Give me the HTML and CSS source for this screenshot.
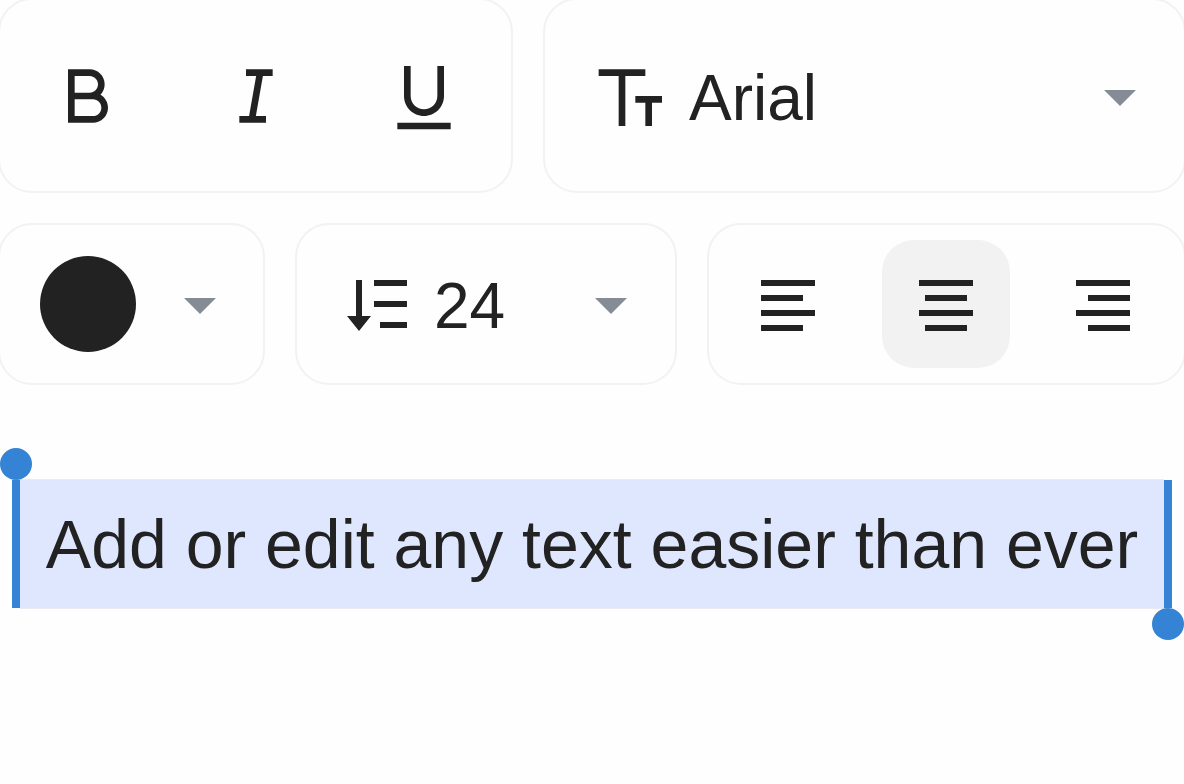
FILE: index.html
```html
<!DOCTYPE html>
<html lang="en">
<head>
<meta charset="utf-8">
<meta name="viewport" content="width=device-width, initial-scale=1">
<title>Text editor</title>
<link rel="stylesheet" href="styles.css">
</head>
<body>
<main class="app">
  <div class="toolbar" role="toolbar" aria-label="Text formatting">
    <div class="row row-style">
      <div class="panel buttons" role="group" aria-label="Style">
        <button class="tool" type="button" aria-label="Bold">
          <svg class="icon icon-large" viewBox="0 0 24 24" aria-hidden="true"><path d="M8 11H12.5C13.88 11 15 9.88 15 8.5C15 7.12 13.88 6 12.5 6H8V11ZM18 15.5C18 17.985 15.985 20 13.5 20H6V4H12.5C14.985 4 17 6.015 17 8.5C17 9.704 16.527 10.798 15.756 11.606C17.098 12.385 18 13.837 18 15.5ZM8 13V18H13.5C14.88 18 16 16.88 16 15.5C16 14.12 14.88 13 13.5 13H8Z"/></svg>
        </button>
        <button class="tool" type="button" aria-label="Italic">
          <svg class="icon icon-large" viewBox="0 0 24 24" aria-hidden="true"><path d="M15 20H7V18H9.927L12.043 6H9V4H17V6H14.073L11.957 18H15V20Z"/></svg>
        </button>
        <button class="tool" type="button" aria-label="Underline">
          <svg class="icon icon-large" viewBox="0 0 24 24" aria-hidden="true"><path d="M8 3V12C8 14.209 9.791 16 12 16C14.209 16 16 14.209 16 12V3H18V12C18 15.314 15.314 18 12 18C8.686 18 6 15.314 6 12V3H8ZM4 20H20V22H4V20Z"/></svg>
        </button>
      </div>
      <div class="panel picker">
        <select class="field field-font" aria-label="Font">
          <option>Arial</option>
          <option>Georgia</option>
          <option>Verdana</option>
        </select>
        <svg class="icon icon-large lead" viewBox="0 0 24 24" aria-hidden="true"><path d="M10 6V21H8V6H2V4H16V6H10ZM18 14V21H16V14H13V12H21V14H18Z"/></svg>
        <svg class="arrow" viewBox="0 0 32 20" aria-hidden="true"><path d="M0 4H32L16 20Z"/></svg>
      </div>
    </div>
    <div class="row row-layout">
      <button class="panel color" type="button" aria-label="Text color" aria-haspopup="true">
        <span class="swatch"></span>
        <svg class="arrow" viewBox="0 0 32 20" aria-hidden="true"><path d="M0 4H32L16 20Z"/></svg>
      </button>
      <div class="panel picker">
        <select class="field field-size" aria-label="Font size">
          <option>24</option>
          <option>32</option>
          <option>48</option>
        </select>
        <svg class="icon lead" viewBox="0 0 24 24" aria-hidden="true"><path d="M10 4H21V6H10ZM10 11H21V13H10ZM12 18H21V20H12ZM4 4H6V16H9L5 21L1 16H4Z"/></svg>
        <svg class="arrow" viewBox="0 0 32 20" aria-hidden="true"><path d="M0 4H32L16 20Z"/></svg>
      </div>
      <div class="panel buttons align" role="group" aria-label="Alignment">
        <button class="tool" type="button" aria-label="Align left" aria-pressed="false">
          <svg class="icon" viewBox="0 0 24 24" aria-hidden="true"><path d="M3 4H21V6H3ZM3 9H17V11H3ZM3 14H21V16H3ZM3 19H17V21H3Z"/></svg>
        </button>
        <button class="tool" type="button" aria-label="Align center" aria-pressed="true">
          <svg class="icon" viewBox="0 0 24 24" aria-hidden="true"><path d="M3 4H21V6H3ZM5 9H19V11H5ZM3 14H21V16H3ZM5 19H19V21H5Z"/></svg>
        </button>
        <button class="tool" type="button" aria-label="Align right" aria-pressed="false">
          <svg class="icon" viewBox="0 0 24 24" aria-hidden="true"><path d="M3 4H21V6H3ZM7 9H21V11H7ZM3 14H21V16H3ZM7 19H21V21H7Z"/></svg>
        </button>
      </div>
    </div>
  </div>
  <div class="selection">
    <input class="text" type="text" aria-label="Text" value="Add or edit any text easier than ever">
  </div>
</main>
</body>
</html>
```
FILE: styles.css
```css
* {
  box-sizing: border-box;
}

body {
  margin: 0;
  background: #fefefe;
  color: #222;
  font-family: "Liberation Sans", Arial, sans-serif;
}

.app {
  overflow: hidden;
}

button,
select,
input {
  margin: 0;
  padding: 0;
  border: 0;
  background: none;
  color: inherit;
  font: inherit;
}

/* The outer panel edges bleed past the window. */
.toolbar {
  display: grid;
  gap: 30px;
  margin: -2px;
}

.row {
  display: grid;
  gap: 30px;
}

.row-style {
  grid-template-columns: 515fr 643fr;
}

.row-layout {
  grid-template-columns: 267fr 382fr 479fr;
}

.panel {
  border: 2px solid #f2f2f2;
  border-radius: 34px;
}

.buttons {
  display: flex;
  align-items: center;
  justify-content: space-between;
  padding: 32px 23px 31px 24px;
}

.align {
  padding: 15px 17px 15px 15px;
}

.tool {
  display: grid;
  place-items: center;
  width: 128px;
  height: 128px;
  border-radius: 32px;
}

.tool[aria-pressed="true"] {
  background: #f2f2f2;
}

.icon {
  display: block;
  width: 72px;
  height: 72px;
  fill: #222;
}

.icon-large {
  width: 80px;
  height: 80px;
}

.arrow {
  display: block;
  width: 32px;
  height: 20px;
  fill: #868c96;
}

/* The select fills the panel; its icons share the same cell. */
.picker {
  display: grid;
  align-items: center;
}

.picker > * {
  grid-area: 1 / 1;
}

.picker > svg {
  pointer-events: none;
}

.lead {
  margin-left: 47px;
}

.picker .arrow {
  justify-self: end;
  margin-right: 48px;
}

.field {
  appearance: none;
  width: 100%;
  height: 100%;
  padding-top: 4px;
  border-radius: 32px;
  font-size: 64px;
}

.field-font {
  padding-left: 144px;
}

.field-size {
  padding-left: 137px;
}

.color {
  display: flex;
  align-items: center;
  justify-content: space-between;
  padding: 0 47px 0 40px;
}

.swatch {
  width: 96px;
  height: 96px;
  border-radius: 50%;
  background: #222;
}

.selection {
  position: relative;
  margin: 97px 12px 32px;
  border: solid #3583d4;
  border-width: 0 8px;
}

.selection::before,
.selection::after {
  content: "";
  position: absolute;
  width: 32px;
  height: 32px;
  border-radius: 50%;
  background: #3583d4;
}

.selection::before {
  bottom: 100%;
  left: -20px;
}

.selection::after {
  top: 100%;
  right: -20px;
}

.text {
  display: block;
  width: 100%;
  height: 128px;
  background: #dfe7ff;
  box-shadow: 0 -1px #e9ebf0, 0 1px #e9ebf0;
  font-size: 68px;
  text-align: center;
}
```
